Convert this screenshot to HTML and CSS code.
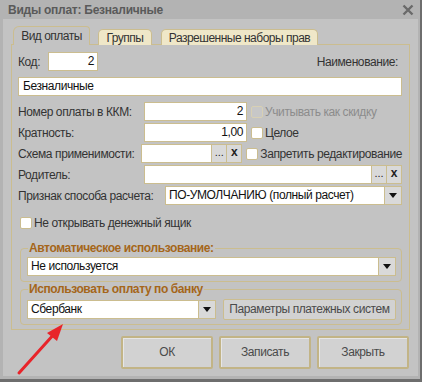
FILE: index.html
```html
<!DOCTYPE html>
<html lang="ru">
<head>
  <meta charset="UTF-8">
  <title>Виды оплат: Безналичные</title>
  <link rel="stylesheet" href="styles.css">
</head>
<body>

<div class="window">
  <div class="titlebar">
    <span class="title">Виды оплат: Безналичные</span>
    <svg class="close" width="12" height="12" viewBox="0 0 12 12">
      <path d="M1.5 1.5 L10.5 10.5 M10.5 1.5 L1.5 10.5" stroke="#6a6a6a" stroke-width="2.4"/>
    </svg>
  </div>

  <div class="client">
    <!-- Tabs -->
    <div class="tabs">
      <div class="tab active">Вид оплаты</div>
      <div class="tab t-groups">Группы</div>
      <div class="tab t-rights">Разрешенные наборы прав</div>
    </div>

    <div class="panel">
      <div class="row">
        <span class="lbl-short">Код:</span>
        <div class="field num code">2</div>
        <span class="grow"></span>
        <span class="lbl name-lbl">Наименование:</span>
      </div>

      <div class="field name">Безналичные</div>

      <div class="row r-first">
        <span class="lbl lbl-col">Номер оплаты в ККМ:</span>
        <div class="field num mid">2</div>
        <span class="check disabled"></span>
        <span class="lbl dim">Учитывать как скидку</span>
      </div>

      <div class="row">
        <span class="lbl lbl-col">Кратность:</span>
        <div class="field num mid">1,00</div>
        <span class="check"></span>
        <span class="lbl">Целое</span>
      </div>

      <div class="row">
        <span class="lbl lbl-col">Схема применимости:</span>
        <div class="field combo mid">
          <span class="grow"></span>
          <span class="btn-mini">...</span>
          <span class="btn-mini x">x</span>
        </div>
        <span class="check"></span>
        <span class="lbl">Запретить редактирование</span>
      </div>

      <div class="row">
        <span class="lbl lbl-col">Родитель:</span>
        <div class="field combo grow">
          <span class="grow"></span>
          <span class="btn-mini">...</span>
          <span class="btn-mini x">x</span>
        </div>
      </div>

      <div class="row">
        <span class="lbl lbl-wide">Признак способа расчета:</span>
        <div class="field combo grow">
          <span class="grow text">ПО-УМОЛЧАНИЮ (полный расчет)</span>
          <span class="btn-mini drop"><i class="arrow"></i></span>
        </div>
      </div>

      <div class="row cash">
        <span class="check"></span>
        <span class="lbl">Не открывать денежный ящик</span>
      </div>

      <fieldset class="group auto">
        <legend>Автоматическое использование:</legend>
        <div class="field combo">
          <span class="grow text">Не используется</span>
          <span class="btn-mini drop"><i class="arrow"></i></span>
        </div>
      </fieldset>

      <fieldset class="group bank">
        <legend>Использовать оплату по банку</legend>
        <div class="row">
          <div class="field combo bank-field">
            <span class="grow text">Сбербанк</span>
            <span class="btn-mini drop"><i class="arrow"></i></span>
          </div>
          <div class="button small">Параметры платежных систем</div>
        </div>
      </fieldset>
    </div>

    <div class="footer">
      <div class="button big">ОК</div>
      <div class="button big">Записать</div>
      <div class="button big">Закрыть</div>
    </div>
  </div>

  <!-- annotation arrow -->
  <svg class="pointer" width="60" height="60" viewBox="0 0 60 60">
    <line x1="4" y1="53" x2="40" y2="13" stroke="#e8242a" stroke-width="3" stroke-linecap="round"/>
    <polygon points="48,4 32,13 42,21" fill="#e8242a"/>
  </svg>
</div>

</body>
</html>
```

FILE: styles.css
```css
body {
  margin: 0;
  font-family: "Liberation Sans", Arial, sans-serif;
  font-size: 12px;
  letter-spacing: -0.4px;
  color: #333;
  background: #b3b3b3;
}

.window {
  position: relative;
  width: 422px;
  height: 382px;
  box-sizing: border-box;
  background: #b3b3b3;
  border-right: 2px solid #6e6e6e;
  border-bottom: 3px solid #6e6e6e;
  overflow: hidden;
}

.titlebar {
  height: 19px;
  display: flex;
  align-items: center;
  justify-content: space-between;
  padding: 0 6px 0 8px;
}

.title {
  font-weight: bold;
  color: #5a5a5a;
  letter-spacing: -0.25px;
}

.client {
  margin: 0 2px 0 3px;
  height: 357px;
  background: #c3c3c3;
  padding: 8px 8px 0 8px;
  box-sizing: border-box;
}

/* tabs */
.tabs {
  display: flex;
  align-items: flex-end;
  gap: 8px;
  padding-left: 2px;
  height: 18px;
  position: relative;
  z-index: 1;
}

.tab {
  background: #efe7c8;
  border: 1px solid #cbbd8f;
  border-bottom: none;
  border-radius: 5px 5px 0 0;
  height: 15px;
  line-height: 16px;
  text-align: center;
  letter-spacing: -0.5px;
  color: #333;
  box-sizing: content-box;
}

.tab.active {
  background: #c3c3c3;
  width: 75px;
  height: 18px;
  line-height: 19px;
  border-radius: 6px 4px 0 0;
}

.t-groups {
  width: 52px;
}

.t-rights {
  width: 155px;
  margin-left: 1px;
}

.panel {
  border: 1px solid #cbbd8f;
  margin-top: -1px;
  padding: 7px 7px 7px 6px;
  height: 286px;
  box-sizing: border-box;
}

.row {
  display: flex;
  align-items: center;
}

.grow {
  flex: 1;
}

.lbl {
  white-space: nowrap;
}

.lbl-short {
  width: 30px;
}

.name-lbl {
  margin-right: 4px;
}

.lbl-col {
  width: 126px;
}

.lbl-wide {
  width: 147px;
}

.dim {
  color: #8c8c8c;
}

.field {
  background: #fff;
  border: 1px solid #cbbd8f;
  height: 19px;
  box-sizing: border-box;
  line-height: 17px;
  padding: 0 3px;
  color: #111;
  display: flex;
}

.num {
  justify-content: flex-end;
}

.code {
  width: 50px;
}

.name {
  margin-top: 6px;
  padding-left: 4px;
}

.mid {
  width: 103px;
}

.r-first {
  margin-top: 6px;
}

.row + .row {
  margin-top: 2px;
}

.combo {
  padding: 0;
}

.combo .text {
  padding-left: 3px;
  overflow: hidden;
  white-space: nowrap;
}

.btn-mini {
  width: 14px;
  border-left: 1px solid #cbbd8f;
  background: #d9d9d9;
  font-size: 11px;
  letter-spacing: 0;
  line-height: 14px;
  text-align: center;
  color: #222;
}

.btn-mini.x {
  font-weight: bold;
  font-size: 12px;
}

.btn-mini.drop {
  width: 16px;
  display: flex;
  align-items: center;
  justify-content: center;
}

.arrow {
  width: 0;
  height: 0;
  border-left: 4px solid transparent;
  border-right: 4px solid transparent;
  border-top: 5px solid #111;
}

.check {
  width: 10px;
  height: 10px;
  border: 1px solid #cbbd8f;
  border-radius: 2px;
  background: #fff;
  margin: 0 2px 0 4px;
  flex: none;
}

.check.disabled {
  background: #c7c7c7;
  border-color: #d8d0b4;
}

.row.cash {
  margin-top: 11px;
  padding-left: 2px;
}

.cash .check {
  margin-left: 0;
}

.group {
  border: 1px solid #cbbd8f;
  border-radius: 4px;
  margin: 0 0 0 2px;
  padding: 1px 5px 5px 6px;
}

.group legend {
  font-weight: bold;
  color: #a5661a;
  padding: 0 1px;
  margin-left: 1px;
  letter-spacing: -0.4px;
}

.group.auto {
  margin-top: 11px;
}

.group.auto .field {
  margin-top: 1px;
}

.group.bank {
  margin-top: 0;
  padding-top: 3px;
  padding-bottom: 4px;
}

.bank-field {
  width: 189px;
}

.button {
  background: #d2d2d2;
  border: 1px solid #cbbd8f;
  border-radius: 2px;
  color: #4a4a4a;
  text-align: center;
  box-sizing: border-box;
}

.button.small {
  margin-left: 7px;
  height: 21px;
  line-height: 19px;
  padding: 0 5px;
  flex: 1;
}

.footer {
  display: flex;
  justify-content: flex-end;
  gap: 6px;
  margin-top: 6px;
  padding-right: 1px;
}

.button.big {
  width: 92px;
  height: 33px;
  line-height: 29px;
  border: 2px solid #c2b486;
  box-shadow: inset 1px 1px 0 #e6e6e6;
}

.pointer {
  position: absolute;
  left: 15px;
  top: 320px;
}
```
